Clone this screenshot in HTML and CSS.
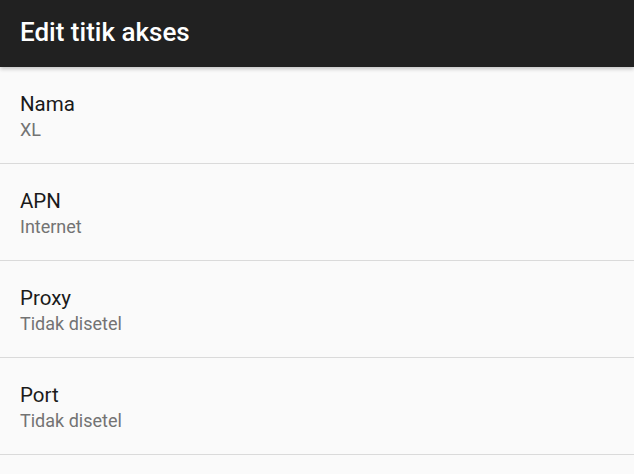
FILE: index.html
```html
<!DOCTYPE html>
<html>
<head>
<meta charset="utf-8">
<link rel="stylesheet" href="styles.css">
</head>
<body>
<header class="appbar">
  <h1 class="appbar-title">Edit titik akses</h1>
</header>
<ul class="prefs">
  <li class="pref">
    <div class="pref-title">Nama</div>
    <div class="pref-summary">XL</div>
  </li>
  <li class="pref">
    <div class="pref-title">APN</div>
    <div class="pref-summary">Internet</div>
  </li>
  <li class="pref">
    <div class="pref-title">Proxy</div>
    <div class="pref-summary">Tidak disetel</div>
  </li>
  <li class="pref">
    <div class="pref-title">Port</div>
    <div class="pref-summary">Tidak disetel</div>
  </li>
</ul>
</body>
</html>
```
FILE: styles.css
```css
html, body {
  margin: 0;
  padding: 0;
  height: 100%;
  overflow: hidden;
}
body {
  background: #fafafa;
  font-family: Roboto, "Noto Sans", "Liberation Sans", sans-serif;
}
.appbar {
  position: relative;
  z-index: 1;
  height: 67px;
  background: #212121;
  display: flex;
  align-items: center;
  padding: 0 20px;
  box-shadow: 0 2px 4px rgba(0,0,0,0.22);
}
.appbar-title {
  margin: 0;
  color: #ffffff;
  font-size: 26px;
  font-weight: 500;
  line-height: 1;
  padding-bottom: 3px;
}
.prefs {
  list-style: none;
  margin: 0;
  padding: 0;
}
.pref {
  height: 97px;
  box-sizing: border-box;
  padding: 24px 20px 0;
  border-bottom: 1px solid #dadada;
}
.pref-title {
  font-size: 20.5px;
  line-height: 26px;
  color: #1a1a1a;
}
.pref-summary {
  font-size: 18px;
  line-height: 25px;
  color: #737373;
}
```
